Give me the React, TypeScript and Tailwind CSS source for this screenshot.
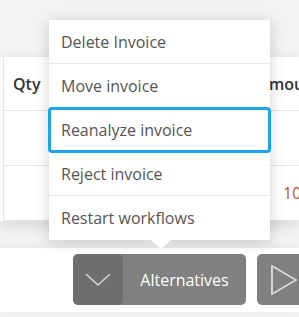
import { useState } from 'react';

const actions = ['Delete Invoice', 'Move invoice', 'Reanalyze invoice', 'Reject invoice', 'Restart workflows'];

function ChevronDown() {
  return (
    <svg width="26" height="14" viewBox="0 0 26 14" fill="none">
      <path d="M1.5 1.5 L13 12 L24.5 1.5" stroke="#d6d6d6" strokeWidth="1.6" strokeLinecap="round" strokeLinejoin="round" />
    </svg>
  );
}

function PlayOutline() {
  return (
    <svg width="28" height="32" viewBox="0 0 28 32" fill="none">
      <path d="M2 2 L26 16 L2 30 Z" stroke="#d6d6d6" strokeWidth="2" strokeLinejoin="round" />
    </svg>
  );
}

export default function App() {
  const [active] = useState('Reanalyze invoice');

  return (
    <div className="relative w-[299px] h-[317px] overflow-hidden bg-[#f3f3f3] font-['Open_Sans',sans-serif]">
      <div className="h-[57px]" />

      {/* invoice lines table */}
      <div className="h-[164px] bg-white shadow-[0_4px_14px_rgba(0,0,0,0.12)]">
        <div className="ml-[3px] h-full border-l border-[#e6e6e6]">
          <div className="flex h-[54px] items-center whitespace-nowrap border-b border-[#e6e6e6] text-[16px] font-semibold text-[#333]">
            <span className="ml-[9px] shrink-0">Qty</span>
            <span className="ml-[218px] shrink-0">Amount</span>
          </div>
          <div className="h-[55px] border-b border-[#e6e6e6]" />
          <div className="flex h-[55px] items-center whitespace-nowrap border-b border-[#e6e6e6] text-[16px] text-[#b5562a]">
            <span className="ml-[279px] shrink-0">100.00</span>
          </div>
        </div>
      </div>

      <div className="h-[27px]" />

      {/* action bar */}
      <div className="flex h-[64px] items-start bg-white pt-[6px] shadow-[0_-2px_10px_rgba(0,0,0,0.05)]">
        <div className="ml-[73px] flex h-[51px] shrink-0 overflow-hidden rounded-[5px] bg-[#808080]">
          <button className="flex w-[50px] shrink-0 items-center justify-center rounded-[5px] bg-[#6e6e6e]">
            <ChevronDown />
          </button>
          <button className="w-[123px] shrink-0 text-[16px] text-white">Alternatives</button>
        </div>
        <button className="ml-[11px] flex h-[51px] w-[50px] shrink-0 items-center justify-center rounded-[5px] bg-[#808080] pl-[4px]">
          <PlayOutline />
        </button>
      </div>

      {/* dropdown menu */}
      <div className="absolute left-[49px] top-[20px] w-[221px] bg-white shadow-[0_2px_14px_rgba(0,0,0,0.18)]">
        {actions.map((a, i) =>
          a === active ? (
            <div
              key={a}
              className="relative -mx-[1px] -my-[1px] flex h-[46px] items-center rounded-[4px] border-[3px] border-[#1ea5e8] pl-[10px] text-[16px] text-[#555]"
            >
              {a}
            </div>
          ) : (
            <div
              key={a}
              className={`flex h-[44px] items-center pl-[12px] text-[16px] text-[#555] ${i < actions.length - 1 ? 'border-b border-[#e8e8e8]' : ''}`}
            >
              {a}
            </div>
          )
        )}
        <div className="absolute left-[102px] top-full h-0 w-0 border-x-[10px] border-t-[9px] border-x-transparent border-t-white" />
      </div>
    </div>
  );
}
